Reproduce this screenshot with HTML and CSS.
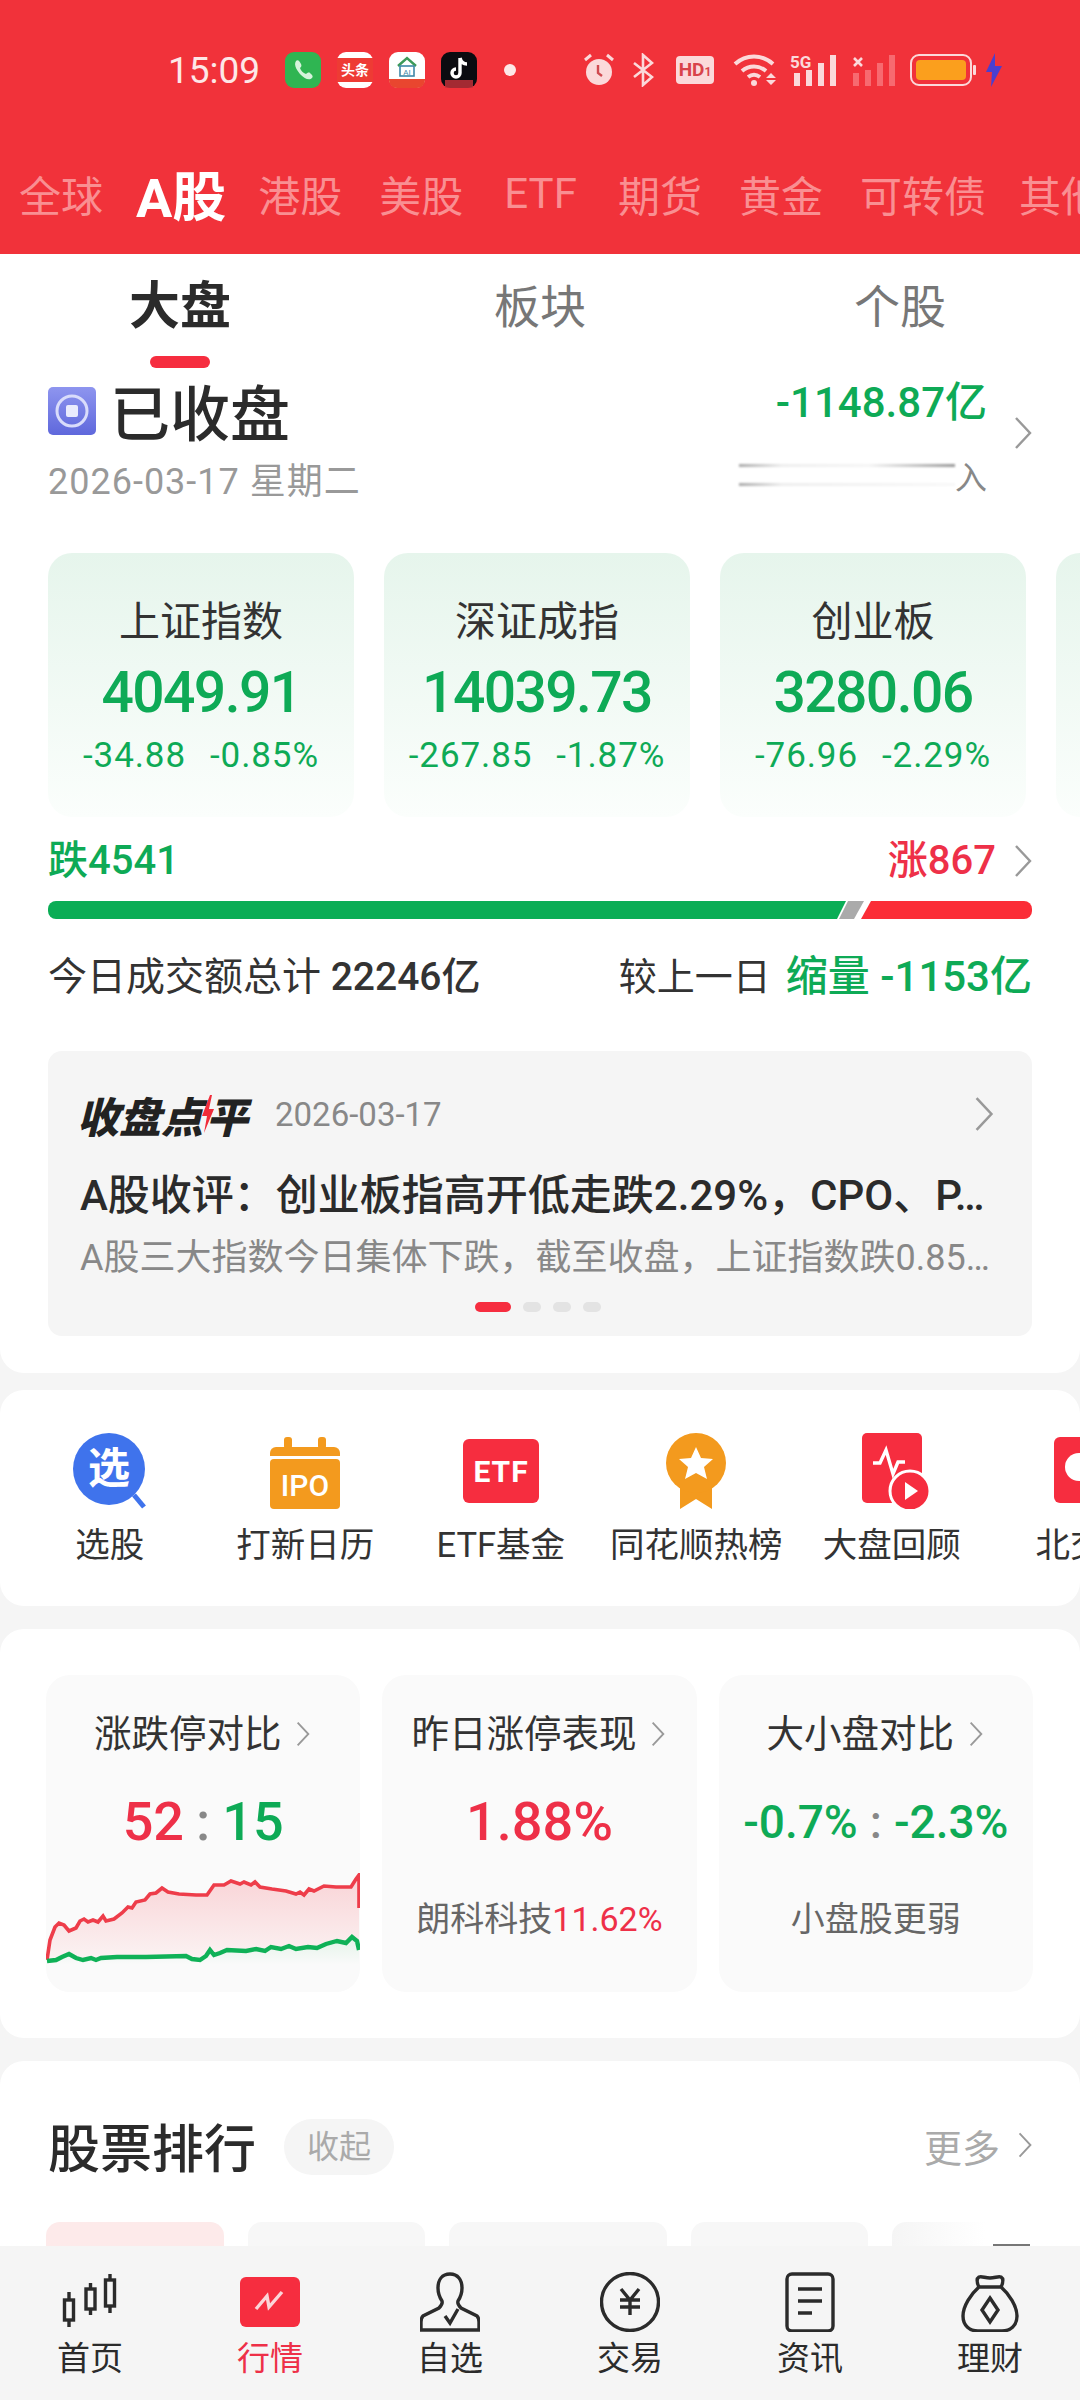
FILE: index.html
```html
<!DOCTYPE html>
<html lang="zh-CN">
<head>
  <meta charset="UTF-8">
  <meta name="viewport" content="width=device-width, initial-scale=1.0">
  <title>行情</title>
  <link rel="stylesheet" href="styles.css">
</head>
<body>
  <svg class="defs" width="0" height="0">
    <symbol id="chev" viewBox="0 0 18 34"><path d="M2 2l14 15L2 32" fill="none" stroke="currentColor" stroke-width="2.4"/></symbol>
  </svg>

  <div class="scroller">
    <!-- Red header -->
    <header class="top">
      <div class="status">
        <span class="time">15:09</span>
        <div class="apps">
          <svg width="36" height="36" viewBox="0 0 36 36"><rect width="36" height="36" rx="9" fill="#2fb552"/><path d="M11 9c2-2 4 1 5 3s0 3-1 4c1 3 3 5 6 6 1-1 3-2 4-1s4 3 2 5c-3 3-8 0-11-3s-8-10-5-14z" fill="#d6f3dc"/></svg>
          <svg width="36" height="36" viewBox="0 0 36 36"><rect width="36" height="36" rx="9" fill="#fff"/><rect y="6" width="36" height="24" fill="#ee3b34"/><text x="18" y="23" class="app-text">头条</text></svg>
          <svg width="36" height="36" viewBox="0 0 36 36"><rect width="36" height="36" rx="9" fill="#fff"/><path d="M0 27h36v1a8 8 0 0 1-8 8H8a8 8 0 0 1-8-8z" fill="#e9462f"/><path d="M9 14l9-8 9 8" fill="none" stroke="#3d9a58" stroke-width="2.4"/><rect x="11" y="14" width="14" height="10" fill="none" stroke="#3f88a8" stroke-width="1.6"/><text x="18" y="22.5" class="app-mini">AI</text></svg>
          <svg width="36" height="36" viewBox="0 0 36 36"><rect width="36" height="36" rx="9" fill="#0b0b10"/><path d="M19 6v15a4 4 0 1 1-4-4M19 6c1 4 4 6 7 6" fill="none" stroke="#fff" stroke-width="3.4"/><path d="M4 28h28v8H4z" fill="#c9323b" opacity=".8"/></svg>
          <span class="dot"></span>
        </div>
        <div class="sys">
          <svg class="alarm" width="32" height="34" viewBox="0 0 32 34"><circle cx="16" cy="19" r="13" fill="#fbd9da"/><path d="M2 7l6-5M30 7l-6-5" stroke="#fbd9da" stroke-width="3"/><path d="M15 12v8l4 3" fill="none" stroke="#d04a50" stroke-width="2.4"/></svg>
          <svg class="bt" width="22" height="34" viewBox="0 0 22 34"><path d="M2 10l18 14-9 8V2l9 8L2 24" fill="none" stroke="#fbd9da" stroke-width="2.6"/></svg>
          <span class="hd">HD<small>1</small></span>
          <svg class="wifi" width="45" height="32" viewBox="0 0 45 32"><path d="M2 10c11-10 27-10 38 0M9 17c7-6 17-6 24 0M15 23c4-3 8-3 12 0" fill="none" stroke="#fbd9da" stroke-width="4"/><circle cx="21" cy="29" r="3" fill="#fbd9da"/><path d="M33 24l5-5 5 5zM33 26l5 5 5-5z" fill="#fbd9da"/></svg>
          <svg class="sig" width="47" height="32" viewBox="0 0 47 32"><text x="0" y="14" class="sig-5g">5G</text><rect x="4" y="19" width="6" height="13" fill="#fbd9da"/><rect x="16" y="16" width="6" height="16" fill="#fbd9da"/><rect x="28" y="9" width="6" height="23" fill="#fbd9da"/><rect x="40" y="1" width="6" height="31" fill="#fbd9da"/></svg>
          <svg class="sig2" width="43" height="32" viewBox="0 0 43 32"><path d="M2 4l8 8M10 4l-8 8" stroke="#fbd9da" stroke-width="2.6"/><rect x="1" y="19" width="6" height="13" fill="#f76a70"/><rect x="13" y="16" width="6" height="16" fill="#f76a70"/><rect x="25" y="9" width="6" height="23" fill="#f76a70"/><rect x="37" y="1" width="6" height="31" fill="#f76a70"/></svg>
          <svg class="batt" width="66" height="32" viewBox="0 0 66 32"><rect x="1" y="1" width="60" height="30" rx="8" fill="none" stroke="#fbd9da" stroke-width="2"/><rect x="6" y="6" width="50" height="20" rx="4" fill="#fb9f1d"/><rect x="63" y="11" width="3" height="10" rx="1" fill="#fbd9da"/></svg>
          <svg class="bolt" width="18" height="34" viewBox="0 0 18 34"><path d="M10 0L1 19h6l-1 15 11-21h-7z" fill="#4a3fd0"/></svg>
        </div>
      </div>
      <nav class="markets">
        <a>全球</a>
        <a class="on">A股</a>
        <a>港股</a>
        <a>美股</a>
        <a class="etf">ETF</a>
        <a>期货</a>
        <a>黄金</a>
        <a>可转债</a>
        <a class="rest">其他</a>
      </nav>
    </header>

    <main class="panel first">
      <div class="subtabs">
        <div class="subtab on">大盘<i></i></div>
        <div class="subtab">板块</div>
        <div class="subtab">个股</div>
      </div>

      <div class="closed">
        <div>
          <div class="closed-title">
            <svg width="48" height="48" viewBox="0 0 48 48"><defs><linearGradient id="cg" x1="0" y1="0" x2="0" y2="1"><stop offset="0" stop-color="#8e95ef"/><stop offset="1" stop-color="#5f68dc"/></linearGradient></defs><rect width="48" height="48" rx="5" fill="url(#cg)"/><circle cx="24" cy="24" r="15" fill="none" stroke="#d9dcfb" stroke-width="3"/><rect x="18" y="18" width="12" height="12" rx="2" fill="#e9ebfd"/></svg>
            <span>已收盘</span>
          </div>
          <div class="closed-date">2026-03-17 星期二</div>
        </div>
        <div class="flow">
          <div>
            <div class="flow-num">-1148.87亿</div>
            <div class="flow-blur">
              <div class="streaks"><i></i><i></i></div>
              <span>入</span>
            </div>
          </div>
          <svg class="chev" width="18" height="34"><use href="#chev"/></svg>
        </div>
      </div>

      <div class="indexes">
        <div class="index">
          <div class="index-name">上证指数</div>
          <div class="index-val">4049.91</div>
          <div class="index-chg"><span>-34.88</span><span>-0.85%</span></div>
        </div>
        <div class="index">
          <div class="index-name">深证成指</div>
          <div class="index-val">14039.73</div>
          <div class="index-chg"><span>-267.85</span><span>-1.87%</span></div>
        </div>
        <div class="index">
          <div class="index-name">创业板</div>
          <div class="index-val">3280.06</div>
          <div class="index-chg"><span>-76.96</span><span>-2.29%</span></div>
        </div>
        <div class="index"></div>
      </div>

      <div class="counts">
        <span class="green">跌4541</span>
        <span class="count-r"><span class="red">涨867</span><svg class="chev" width="18" height="34"><use href="#chev"/></svg></span>
      </div>
      <div class="bar">
        <div class="bar-down"></div>
        <div class="bar-flat"></div>
        <div class="bar-up"></div>
      </div>

      <div class="volume">
        <span>今日成交额总计 <b>22246亿</b></span>
        <span class="vol-r"><span>较上一日</span><em class="green">缩量 -1153亿</em></span>
      </div>

      <section class="review">
        <div class="review-head">
          <span class="review-logo">收盘点<svg width="14" height="38" viewBox="0 0 14 38"><path d="M9 0L1 21h5L3 38l10-24H8l3-14z" fill="#f02c3a"/></svg><span class="logo-ping">平</span></span>
          <span class="review-date">2026-03-17</span>
          <svg class="chev" width="20" height="36"><use href="#chev"/></svg>
        </div>
        <div class="review-title">A股收评：创业板指高开低走跌2.29%，CPO、P…</div>
        <div class="review-sub">A股三大指数今日集体下跌，截至收盘，上证指数跌0.85…</div>
        <div class="dots"><i class="on"></i><i></i><i></i><i></i></div>
      </section>
    </main>

    <!-- Quick entries -->
    <section class="panel entries">
      <div class="entry">
        <svg width="76" height="76" viewBox="0 0 76 76"><circle cx="37" cy="36" r="36" fill="#3f73ec"/><path d="M62 62l10 12" stroke="#3f73ec" stroke-width="5"/><text x="37" y="50" class="ico-xuan">选</text></svg>
        <span>选股</span>
      </div>
      <div class="entry">
        <svg width="76" height="76" viewBox="0 0 76 76"><rect x="3" y="26" width="70" height="50" rx="4" fill="#f39a1e"/><path d="M3 20a6 6 0 0 1 6-6h58a6 6 0 0 1 6 6v3H3z" fill="#f39a1e"/><rect x="17" y="4" width="8" height="12" rx="3" fill="#f39a1e"/><rect x="51" y="4" width="8" height="12" rx="3" fill="#f39a1e"/><text x="38" y="63" class="ico-ipo">IPO</text></svg>
        <span>打新日历</span>
      </div>
      <div class="entry">
        <svg width="76" height="76" viewBox="0 0 76 76"><rect y="6" width="76" height="64" rx="6" fill="#f62d3f"/><text x="38" y="49" class="ico-etf">ETF</text></svg>
        <span>ETF基金</span>
      </div>
      <div class="entry">
        <svg width="76" height="76" viewBox="0 0 76 76"><path d="M22 50v26l16-10 16 10V50z" fill="#f39a1e"/><circle cx="38" cy="30" r="30" fill="#f39a1e"/><path d="M38 14l5 11 12 1-9 8 3 12-11-6-11 6 3-12-9-8 12-1z" fill="#fff"/></svg>
        <span>同花顺热榜</span>
      </div>
      <div class="entry">
        <svg width="76" height="76" viewBox="0 0 76 76"><rect x="8" width="60" height="70" rx="5" fill="#f62d3f"/><path d="M19 30h7l6-13 7 24 5-12h7" fill="none" stroke="#fff" stroke-width="3.4"/><circle cx="56" cy="58" r="20" fill="#f62d3f" stroke="#fff" stroke-width="3"/><path d="M51 49l13 9-13 9z" fill="#fff"/></svg>
        <span>大盘回顾</span>
      </div>
      <div class="entry">
        <svg width="76" height="76" viewBox="0 0 76 76"><rect x="5" y="4" width="71" height="66" rx="6" fill="#f62d3f"/><circle cx="30" cy="34" r="14" fill="#fff"/></svg>
        <span>北交所</span>
      </div>
    </section>

    <!-- Compare cards -->
    <section class="panel compares">
      <div class="compare">
        <div class="compare-name">涨跌停对比<svg class="chev" width="14" height="26"><use href="#chev"/></svg></div>
        <div class="compare-val"><span class="red">52</span><span class="sep">:</span><span class="green">15</span></div>
        <svg class="chart" width="314" height="119" viewBox="0 0 314 119" preserveAspectRatio="none">
          <defs>
            <linearGradient id="redfill" x1="0" y1="0" x2="0" y2="1"><stop offset="0" stop-color="#f9d3d6"/><stop offset="1" stop-color="#fbf4f4"/></linearGradient>
            <linearGradient id="greenfill" x1="0" y1="0" x2="0" y2="1"><stop offset="0" stop-color="#e3f3e8"/><stop offset=".5" stop-color="#fafafa"/></linearGradient>
          </defs>
          <path d="M1 87L4 67L9 54L13 50L18 52L23 58L30 55L34 48L38 46L42 49L47 47L52 49L57 43L60 48L68 46L76 40L82 34L86 35L90 29L99 27L104 21L110 20L116 15L122 19L133 21L150 22L161 22L168 12L178 12L185 8L194 11L198 9L205 12L209 9L214 14L226 16L240 18L250 21L254 19L258 22L263 16L268 18L278 13L290 14L305 14L310 6L313 2V90H1Z" fill="url(#redfill)"/>
          <path d="M1 88L10 87L16 84L23 81L30 85L37 87L45 85L50 87L55 85L71 84L100 84L140 83L146 86L154 87L160 83L164 77L168 82L174 80L181 77L200 78L210 76L219 78L225 74L235 76L243 73L250 76L262 74L271 75L280 71L291 68L300 70L306 64L311 68L313 77V119H1Z" fill="url(#greenfill)"/>
          <path d="M1 87L4 67L9 54L13 50L18 52L23 58L30 55L34 48L38 46L42 49L47 47L52 49L57 43L60 48L68 46L76 40L82 34L86 35L90 29L99 27L104 21L110 20L116 15L122 19L133 21L150 22L161 22L168 12L178 12L185 8L194 11L198 9L205 12L209 9L214 14L226 16L240 18L250 21L254 19L258 22L263 16L268 18L278 13L290 14L305 14L310 6L313 2V35" fill="none" stroke="#ee3d4a" stroke-width="3.6"/>
          <path d="M1 88L10 87L16 84L23 81L30 85L37 87L45 85L50 87L55 85L71 84L100 84L140 83L146 86L154 87L160 83L164 77L168 82L174 80L181 77L200 78L210 76L219 78L225 74L235 76L243 73L250 76L262 74L271 75L280 71L291 68L300 70L306 64L311 68L313 77" fill="none" stroke="#0fb157" stroke-width="4.4"/>
        </svg>
      </div>
      <div class="compare">
        <div class="compare-name">昨日涨停表现<svg class="chev" width="14" height="26"><use href="#chev"/></svg></div>
        <div class="compare-val red">1.88%</div>
        <div class="compare-sub">朗科科技<span class="red">11.62%</span></div>
      </div>
      <div class="compare">
        <div class="compare-name">大小盘对比<svg class="chev" width="14" height="26"><use href="#chev"/></svg></div>
        <div class="compare-val small green"><span>-0.7%</span><span class="sep">:</span><span>-2.3%</span></div>
        <div class="compare-sub">小盘股更弱</div>
      </div>
    </section>

    <!-- Ranking -->
    <section class="panel ranking">
      <div class="rank-head">
        <h2>股票排行</h2>
        <span class="pill">收起</span>
        <span class="more">更多<svg class="chev" width="14" height="34"><use href="#chev"/></svg></span>
      </div>
      <div class="chips">
        <div class="chip pink"></div>
        <div class="chip w1"></div>
        <div class="chip w2"></div>
        <div class="chip w1"></div>
        <div class="chip last"><i></i></div>
      </div>
    </section>
  </div>

  <!-- Bottom nav -->
  <nav class="tabbar">
    <a class="tab">
      <svg width="60" height="60" viewBox="0 0 60 60" fill="none" stroke="#2b2b2b" stroke-width="3.4"><path d="M9 20v35M30.500 11v32M50 2v39"/><rect x="4.500" y="28" width="9" height="20" fill="#f5f5f5"/><rect x="26" y="17" width="9" height="20" fill="#f5f5f5"/><rect x="45.500" y="8" width="9" height="26" fill="#f5f5f5"/></svg>
      <span>首页</span>
    </a>
    <a class="tab on">
      <svg width="60" height="60" viewBox="0 0 60 60"><rect y="5" width="60" height="50" rx="6" fill="#f62d3f"/><path d="M16 37l11-13 2 11 13-15" fill="none" stroke="#fbd5d8" stroke-width="3.4"/></svg>
      <span>行情</span>
    </a>
    <a class="tab">
      <svg width="60" height="60" viewBox="0 0 60 60" fill="none" stroke="#2b2b2b" stroke-width="3.4"><path d="M30 2c-8 0-12 6-12 14 0 6 2 10 4 13 1 3-1 5-3 7L3 44c-2 2-2 4-2 6v8h58v-8c0-2 0-4-2-6L41 36c-2-2-4-4-3-7 2-3 4-7 4-13 0-8-4-14-12-14z"/><path d="M25 44l5 7 8-14"/></svg>
      <span>自选</span>
    </a>
    <a class="tab">
      <svg width="60" height="60" viewBox="0 0 60 60" fill="none" stroke="#2b2b2b" stroke-width="3.4"><circle cx="30" cy="30" r="28.500"/><path d="M21 17l9 11 9-11M20 28h20M20 35h20M30 28v15"/></svg>
      <span>交易</span>
    </a>
    <a class="tab">
      <svg width="60" height="60" viewBox="0 0 60 60" fill="none" stroke="#2b2b2b" stroke-width="3.400"><rect x="7" y="2" width="46" height="57" rx="5"/><path d="M18 17h24M18 29h24M18 41h14"/></svg>
      <span>资讯</span>
    </a>
    <a class="tab">
      <svg width="60" height="60" viewBox="0 0 60 60" fill="none" stroke="#2b2b2b" stroke-width="3.400"><path d="M19 15c-2-4-3-8 0-10 3-1 6 1 11 1s8-2 11-1c3 2 2 6 0 10"/><path d="M19 15h22c8 7 16 19 16 29 0 10-7 15-15 15H18C10 59 3 54 3 44c0-10 8-22 16-29z"/><path d="M30 26l8 12-8 12-8-12z"/></svg>
      <span>理财</span>
    </a>
  </nav>
</body>
</html>
```

FILE: styles.css
```css
* {
  box-sizing: border-box;
}

html, body {
  margin: 0;
  padding: 0;
}

body {
  width: 1080px;
  height: 2400px;
  display: flex;
  flex-direction: column;
  overflow: hidden;
  background-color: #f5f5f5;
  color: #333;
  font-family: Roboto, "Noto Sans CJK SC", sans-serif;
}

.defs {
  position: absolute;
}

.scroller {
  flex: 1;
  min-height: 0;
  overflow: hidden;
}

.green { color: #0eaa56; }
.red { color: #ee3048; }

.chev {
  flex: none;
  color: #999;
}

/* Header */
.top {
  height: 254px;
  background-color: #f1323a;
}

.status {
  height: 140px;
  display: flex;
  align-items: center;
  padding-left: 168px;
}

.time {
  width: 117px;
  font-size: 37px;
  color: #fde7e7;
}

.apps {
  display: flex;
  align-items: center;
  gap: 16px;
}

.app-text {
  font-size: 14px;
  font-weight: 700;
  fill: #fff;
  text-anchor: middle;
}

.app-mini {
  font-size: 8px;
  fill: #3f88a8;
  text-anchor: middle;
}

.dot {
  width: 12px;
  height: 12px;
  margin-left: 11px;
  border-radius: 50%;
  background-color: #fde7e7;
}

.sys {
  display: flex;
  align-items: center;
  margin-left: 67px;
}

.bt { margin-left: 17px; }
.wifi { margin-left: 19px; }
.sig { margin-left: 12px; }
.sig2 { margin-left: 15px; }
.batt { margin-left: 15px; }
.bolt { margin-left: 9px; }

.sig-5g {
  font-size: 17px;
  font-weight: 700;
  fill: #fbd9da;
}

.hd {
  margin-left: 22px;
  width: 38px;
  height: 28px;
  border-radius: 4px;
  background-color: #fbd9da;
  color: #d9434a;
  font-size: 19px;
  line-height: 28px;
  font-weight: 700;
  text-align: center;
  white-space: nowrap;
}

.hd small {
  font-size: 12px;
}

.markets {
  height: 110px;
  display: flex;
  align-items: center;
  gap: 37px;
  padding: 0 0 4px 19px;
  overflow: hidden;
  white-space: nowrap;
}

.markets a {
  flex: none;
  font-size: 42px;
  color: #f98f92;
}

.markets a.on {
  margin: 0 -5px 0 -4px;
  font-size: 54px;
  font-weight: 700;
  color: #fff;
}

.markets a.etf {
  padding: 0 4px;
}

.markets a.rest {
  margin-left: -4px;
}

/* Panels */
.panel {
  background-color: #fff;
  border-radius: 24px;
}

.first {
  height: 1119px;
  border-radius: 0 0 24px 24px;
}

.subtabs {
  height: 112px;
  display: grid;
  grid-template-columns: repeat(3, 360px);
}

.subtab {
  text-align: center;
  font-size: 46px;
  line-height: 106px;
  color: #777;
}

.subtab.on {
  font-size: 51px;
  font-weight: 700;
  color: #2b2b2b;
}

.subtab i {
  display: block;
  width: 60px;
  height: 12px;
  margin: -4px auto 0;
  border-radius: 6px;
  background-color: #f62d3f;
}

.closed {
  display: flex;
  justify-content: space-between;
  height: 140px;
  padding: 0 48px;
}

.closed-title {
  display: flex;
  align-items: center;
  gap: 14px;
  margin-top: 10px;
  font-size: 60px;
  line-height: 70px;
  font-weight: 500;
  color: #2b2b2b;
}

.closed-title span {
  position: relative;
  top: 5px;
}

.closed-date {
  margin-top: 11px;
  font-size: 36px;
  line-height: 50px;
  letter-spacing: 1px;
  color: #999;
}

.flow {
  display: flex;
  align-items: center;
  gap: 27px;
  margin-top: -7px;
}

.flow-num {
  font-size: 42px;
  line-height: 60px;
  font-weight: 500;
  color: #0eaa56;
  text-align: right;
}

.flow-blur {
  display: flex;
  align-items: center;
  justify-content: flex-end;
  margin-top: 25px;
  height: 34px;
}

.flow-blur span {
  font-size: 32px;
  color: #888;
}

.streaks {
  width: 216px;
  display: flex;
  flex-direction: column;
  gap: 16px;
}

.streaks i {
  display: block;
  height: 3px;
  filter: blur(1px);
  background: linear-gradient(90deg, #aaa, #eee 20%, #f5f5f5 60%, #999);
}

.streaks i:last-child {
  background: linear-gradient(90deg, #aaa, #eee 20%, #f8f8f8);
}

.indexes {
  display: flex;
  gap: 30px;
  margin-top: 47px;
  padding-left: 48px;
  overflow: hidden;
}

.index {
  flex: none;
  width: 306px;
  height: 264px;
  padding-top: 44px;
  border-radius: 24px;
  text-align: center;
  background: linear-gradient(180deg, #e6f5ec, #fbfefc);
}

.index-name {
  font-size: 41px;
  line-height: 50px;
  color: #333;
}

.index-val {
  margin-top: 11px;
  font-size: 57px;
  line-height: 70px;
  font-weight: 500;
  letter-spacing: -1.6px;
  color: #0eaa56;
}

.index-chg {
  display: flex;
  justify-content: center;
  gap: 24px;
  margin-top: 6px;
  font-size: 35px;
  line-height: 44px;
  letter-spacing: .9px;
  color: #0eaa56;
}

.counts {
  display: flex;
  justify-content: space-between;
  align-items: center;
  margin-top: 19px;
  padding: 0 48px;
  font-size: 40px;
  line-height: 50px;
  font-weight: 500;
}

.count-r {
  display: flex;
  align-items: center;
  gap: 18px;
}

.bar {
  display: flex;
  height: 18px;
  margin: 15px 48px 0;
  border-radius: 8px;
  overflow: hidden;
}

.bar-down {
  width: 798px;
  background-color: #0aad55;
  clip-path: polygon(0 0, 100% 0, calc(100% - 9px) 100%, 0 100%);
}

.bar-flat {
  width: 25px;
  margin-left: -7px;
  background-color: #aaa;
  clip-path: polygon(9px 0, 100% 0, 15px 100%, 0 100%);
}

.bar-up {
  flex: 1;
  margin-left: -3px;
  background-color: #fb2d37;
  clip-path: polygon(10px 0, 100% 0, 100% 100%, 0 100%);
}

.volume {
  display: flex;
  justify-content: space-between;
  margin-top: 33px;
  padding: 0 48px;
  font-size: 39px;
  line-height: 50px;
  white-space: nowrap;
  color: #333;
}

.volume b {
  font-weight: 500;
}

.vol-r {
  display: flex;
  gap: 15px;
  font-size: 38px;
}

.volume em {
  font-size: 42px;
  font-style: normal;
  font-weight: 500;
}

.review {
  height: 285px;
  margin: 49px 48px 0;
  padding: 38px 38px 0 32px;
  border-radius: 14px;
  background-color: #f5f5f5;
}

.review-head {
  display: flex;
  align-items: center;
  height: 50px;
}

.review-logo {
  display: flex;
  align-items: center;
  margin-left: -3px;
  font-size: 42px;
  font-weight: 900;
  font-style: italic;
  color: #222;
}

.review-logo svg {
  margin-left: -2px;
}

.logo-ping {
  margin-left: -9px;
}

.review-date {
  flex: 1;
  margin-left: 27px;
  font-size: 33px;
  color: #888;
}

.review-title {
  margin-top: 29px;
  font-size: 42px;
  line-height: 56px;
  font-weight: 500;
  white-space: nowrap;
  color: #2b2b2b;
}

.review-sub {
  margin-top: 9px;
  font-size: 36px;
  line-height: 50px;
  white-space: nowrap;
  color: #888;
}

.dots {
  display: flex;
  justify-content: center;
  gap: 12px;
  margin: 19px 0 0 2px;
}

.dots i {
  width: 18px;
  height: 10px;
  border-radius: 5px;
  background-color: #e3e3e3;
}

.dots i.on {
  width: 36px;
  background-color: #f62d3f;
}

/* Quick entries */
.entries {
  display: flex;
  height: 216px;
  margin-top: 17px;
  padding: 43px 0 0 12px;
  overflow: hidden;
}

.entry {
  flex: none;
  width: 195.500px;
  display: flex;
  flex-direction: column;
  align-items: center;
  gap: 14px;
  font-size: 34.500px;
  line-height: 44px;
  white-space: nowrap;
  color: #333;
}

.ico-xuan {
  font-size: 42px;
  font-weight: 700;
  fill: #fff;
  text-anchor: middle;
}

.ico-ipo {
  font-size: 30px;
  font-weight: 500;
  fill: #fff;
  text-anchor: middle;
}

.ico-etf {
  font-size: 30px;
  font-weight: 700;
  letter-spacing: 1px;
  fill: #fff;
  text-anchor: middle;
}

/* Compare cards */
.compares {
  display: grid;
  grid-template-columns: repeat(3, 1fr);
  gap: 22px;
  height: 409px;
  margin-top: 23px;
  padding: 46px 47px 46px 46px;
}

.compare {
  padding-top: 34px;
  border-radius: 24px;
  background-color: #fafafa;
  text-align: center;
  overflow: hidden;
}

.compare-name {
  display: flex;
  justify-content: center;
  align-items: center;
  gap: 15px;
  margin-left: -2px;
  font-size: 37.500px;
  line-height: 50px;
  color: #333;
}

.compare-val {
  display: flex;
  justify-content: center;
  align-items: center;
  margin-top: 28px;
  font-size: 54px;
  line-height: 70px;
  font-weight: 500;
}

.compare-val.small {
  font-size: 46px;
}

.sep {
  margin: 0 12px;
  color: #888;
}

.chart {
  display: block;
  margin-top: 16px;
}

.compare-sub {
  margin-top: 40px;
  font-size: 34px;
  line-height: 44px;
  color: #666;
  white-space: nowrap;
}

/* Ranking */
.ranking {
  margin-top: 23px;
  padding-top: 49px;
  height: 400px;
}

.rank-head {
  display: flex;
  align-items: center;
  height: 70px;
  padding: 0 48px;
}

.rank-head h2 {
  margin: 0;
  font-size: 52px;
  font-weight: 500;
  color: #2b2b2b;
}

.pill {
  margin: 4px 0 0 28px;
  width: 110px;
  height: 56px;
  border-radius: 28px;
  background-color: #f5f5f5;
  font-size: 32px;
  line-height: 56px;
  text-align: center;
  color: #aaa;
}

.more {
  display: flex;
  align-items: center;
  gap: 18px;
  margin-left: auto;
  font-size: 38px;
  color: #aaa;
}

.chips {
  display: flex;
  gap: 24px;
  margin-top: 42px;
  padding-left: 46px;
}

.chip {
  flex: none;
  height: 80px;
  width: 178px;
  border-radius: 14px;
  background-color: #f7f7f7;
}

.chip.pink { background-color: #fdeaea; }
.chip.w1 { width: 177px; }
.chip.w2 { width: 218px; }

.chip.last {
  width: 187px;
  padding-top: 22px;
  background: linear-gradient(90deg, #f5f5f5, #fff 50%);
}

.chip.last i {
  display: block;
  width: 37px;
  height: 2px;
  margin-left: 101px;
  background-color: #777;
}

/* Bottom nav */
.tabbar {
  flex: none;
  height: 154px;
  display: grid;
  grid-template-columns: repeat(6, 180px);
  background-color: #f5f5f5;
}

.tab {
  display: flex;
  flex-direction: column;
  align-items: center;
  gap: 5px;
  padding-top: 26px;
  font-size: 33px;
  line-height: 44px;
  color: #2b2b2b;
}

.tab.on {
  color: #ee3048;
}
```
